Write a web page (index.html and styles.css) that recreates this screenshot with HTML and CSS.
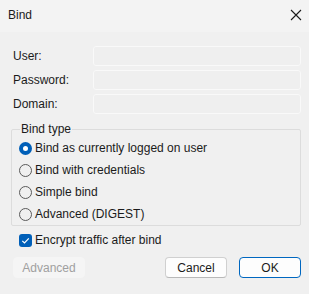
FILE: index.html
```html
<!DOCTYPE html>
<html lang="en">
<head>
    <meta charset="UTF-8">
    <title>Bind</title>
    <link rel="stylesheet" href="styles.css">
</head>
<body>
    <div class="dialog">
        <header class="titlebar">
            <span class="title">Bind</span>
            <svg class="close" width="12" height="12" viewBox="0 0 12 12">
                <path d="M1 1 L11 11 M11 1 L1 11" stroke="#1a1a1a" stroke-width="1.1" fill="none"/>
            </svg>
        </header>

        <main class="content">
            <div class="fields">
                <label>User:</label>
                <div class="field"></div>
                <label>Password:</label>
                <div class="field"></div>
                <label>Domain:</label>
                <div class="field"></div>
            </div>

            <fieldset class="group">
                <legend>Bind type</legend>
                <div class="option"><span class="radio checked"></span>Bind as currently logged on user</div>
                <div class="option"><span class="radio"></span>Bind with credentials</div>
                <div class="option"><span class="radio"></span>Simple bind</div>
                <div class="option"><span class="radio"></span>Advanced (DIGEST)</div>
            </fieldset>

            <div class="option check-row">
                <span class="checkbox">
                    <svg width="13" height="13" viewBox="0 0 13 13">
                        <path d="M3.3 6.8 L5.5 9 L9.8 4.4" stroke="#fff" stroke-width="1.2" fill="none"/>
                    </svg>
                </span>Encrypt traffic after bind
            </div>

            <div class="buttons">
                <button class="btn disabled">Advanced</button>
                <span class="spacer"></span>
                <button class="btn">Cancel</button>
                <button class="btn default">OK</button>
            </div>
        </main>
    </div>
</body>
</html>
```

FILE: styles.css
```css
body {
    margin: 0;
    font-family: 'Liberation Sans', sans-serif;
    font-size: 12px;
    color: #1b1b1b;
    background-color: #f0f0f0;
}

.dialog {
    width: 309px;
    height: 294px;
    background-color: #f0f0f0;
}

.titlebar {
    height: 32px;
    background-color: #f3f3f3;
    display: flex;
    align-items: center;
    justify-content: space-between;
    padding: 0 7px 0 8px;
    box-sizing: border-box;
}

.title {
    margin-top: -2px;
}

.close {
    margin-top: -2px;
}

.content {
    padding: 14px 8px 0 13px;
}

.fields {
    display: grid;
    grid-template-columns: 80px 208px;
    row-gap: 4px;
    align-items: center;
}

.fields label {
    line-height: 20px;
}

.field {
    height: 18px;
    border: 1px solid #f9f9f9;
    border-radius: 3px;
    background-color: #efefef;
}

.group {
    margin: 8px 0 0 -2px;
    padding: 1px 0 0 7px;
    width: 281px;
    border: 1px solid #dcdcdc;
    border-radius: 2px;
}

.group legend {
    padding: 0 1px;
    margin-left: 1px;
    line-height: 14px;
}

.option {
    display: flex;
    align-items: center;
    height: 22px;
    white-space: nowrap;
}

.radio {
    width: 11px;
    height: 11px;
    border: 1px solid #5a5a5a;
    border-radius: 50%;
    margin-right: 3px;
    box-sizing: content-box;
}

.radio.checked {
    width: 5px;
    height: 5px;
    border: 4px solid #005fb8;
    background-color: #fff;
}

.check-row {
    margin: 3px 0 0 6px;
}

.checkbox {
    width: 13px;
    height: 13px;
    border-radius: 3px;
    background-color: #005fb8;
    margin-right: 3px;
    display: flex;
}

.buttons {
    display: flex;
    align-items: center;
    margin-top: 6px;
    gap: 12px;
}

.spacer {
    flex: 1;
}

.btn {
    font-family: 'Liberation Sans', sans-serif;
    font-size: 12px;
    height: 21px;
    padding: 0;
    border: 1px solid #d0d0d0;
    border-bottom-color: #b8b8b8;
    border-radius: 4px;
    background-color: #fdfdfd;
    color: #1b1b1b;
    width: 62px;
}

.btn.disabled {
    width: 72px;
    background-color: #f5f5f5;
    border-color: #f5f5f5;
    color: #a0a0a0;
}

.btn.default {
    border: 1px solid #0067c0;
}
```
